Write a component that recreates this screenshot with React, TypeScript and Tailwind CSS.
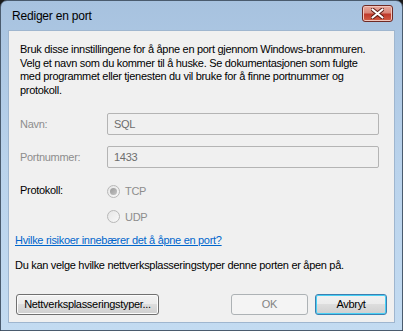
import React from 'react';

const font = { fontFamily: '"Liberation Sans", Arial, sans-serif' };

const Radio = ({ checked, label }: { checked?: boolean; label: string }) => (
  <div className="flex items-center gap-[5px] text-[#8d8d8d]">
    <div className="w-[13px] h-[13px] rounded-full border border-[#b8b8b8] bg-gradient-to-br from-[#e6e6e6] to-[#f8f8f8] flex items-center justify-center">
      {checked && <div className="w-[7px] h-[7px] rounded-full bg-gradient-to-br from-[#9a9a9a] to-[#c4c4c4]" />}
    </div>
    <span>{label}</span>
  </div>
);

const Field = ({ label, value }: { label: string; value: string }) => (
  <div className="flex items-center">
    <span className="w-[87px] text-[#8d8d8d]">{label}</span>
    <div className="w-[272px] h-[22px] border border-[#b4b4b4] rounded-[2px] bg-[#f0f0f0] flex items-center px-[6px] text-[#6d6d6d]">
      {value}
    </div>
  </div>
);

const Btn = ({ children, w, variant }: { children: React.ReactNode; w: string; variant?: 'disabled' | 'default' }) => {
  if (variant === 'disabled') {
    return (
      <div className={`${w} h-[21px] rounded-[3px] border border-[#adb2b5] bg-[#f4f4f4] text-[#838383] flex items-center justify-center`}>
        {children}
      </div>
    );
  }
  return (
    <div
      className={`${w} h-[21px] rounded-[3px] border ${variant === 'default' ? 'border-[#3c7fb1] shadow-[inset_0_0_0_1px_#48d0f5]' : 'border-[#707070] shadow-[inset_0_0_0_1px_#fcfcfc]'} bg-[linear-gradient(#f2f2f2_0%,#ebebeb_49%,#dddddd_50%,#cfcfcf_100%)] text-black flex items-center justify-center`}
    >
      {children}
    </div>
  );
};

export default function App() {
  return (
    <div className="w-[403px] h-[331px] bg-[#1a1a1a] overflow-hidden" style={font}>
      <div className="w-[403px] h-[331px] rounded-t-[7px] border border-[#4a5b6e] bg-gradient-to-b from-[#a7c2df] via-[#bad3ec] to-[#c3dbf1] flex flex-col px-[7px] pb-[7px] text-[11px] tracking-[-0.3px] whitespace-nowrap">
        {/* title bar */}
        <div className="h-[29px] shrink-0 flex items-center justify-between pl-[4px] pr-[2px]">
          <span className="text-black text-[12px] tracking-[-0.2px] pt-[1px]">Rediger en port</span>
          <div className="w-[31px] h-[17px] -mt-[4px] rounded-[3px] border border-[#6e2a25] bg-[linear-gradient(#e9a99c_0%,#d9877a_45%,#c0392b_55%,#d25e46_100%)] flex items-center justify-center shadow-[inset_0_0_0_1px_#f1c6bd]">
            <svg width="13" height="11" viewBox="0 0 13 11">
              <path d="M1.5 1.5 L11.5 9.5 M11.5 1.5 L1.5 9.5" stroke="#5b1a14" strokeWidth="4" strokeLinecap="round" />
              <path d="M1.5 1.5 L11.5 9.5 M11.5 1.5 L1.5 9.5" stroke="#ffffff" strokeWidth="2.2" strokeLinecap="round" />
            </svg>
          </div>
        </div>
        {/* client */}
        <div className="flex-1 min-h-0 bg-[#f0f0f0] border border-[#9fb6cf] text-black flex flex-col">
          <div className="pl-[11px] pt-[12px] leading-[13.5px]">
            <div>Bruk disse innstillingene for å åpne en port gjennom Windows-brannmuren.</div>
            <div>Velg et navn som du kommer til å huske. Se dokumentasjonen som fulgte</div>
            <div>med programmet eller tjenesten du vil bruke for å finne portnummer og</div>
            <div>protokoll.</div>
          </div>
          <div className="pl-[11px] mt-[16px] flex flex-col gap-[11px]">
            <Field label="Navn:" value="SQL" />
            <Field label="Portnummer:" value="1433" />
          </div>
          <div className="pl-[11px] mt-[13px] flex">
            <span className="w-[87px] pt-[1px]">Protokoll:</span>
            <div className="flex flex-col gap-[9px] pt-[2px]">
              <Radio checked label="TCP" />
              <Radio label="UDP" />
            </div>
          </div>
          <div className="pl-[6px] mt-[7px]">
            <span className="text-[#0066cc] underline">Hvilke risikoer innebærer det å åpne en port?</span>
          </div>
          <div className="pl-[6px] mt-[8px]">Du kan velge hvilke nettverksplasseringstyper denne porten er åpen på.</div>
          <div className="mt-auto mb-[7px] px-[7px] flex items-center">
            <Btn w="w-[143px]">Nettverksplasseringstyper...</Btn>
            <div className="flex-1" />
            <Btn w="w-[77px]" variant="disabled">OK</Btn>
            <div className="w-[7px]" />
            <Btn w="w-[72px]" variant="default">Avbryt</Btn>
          </div>
        </div>
      </div>
    </div>
  );
}
